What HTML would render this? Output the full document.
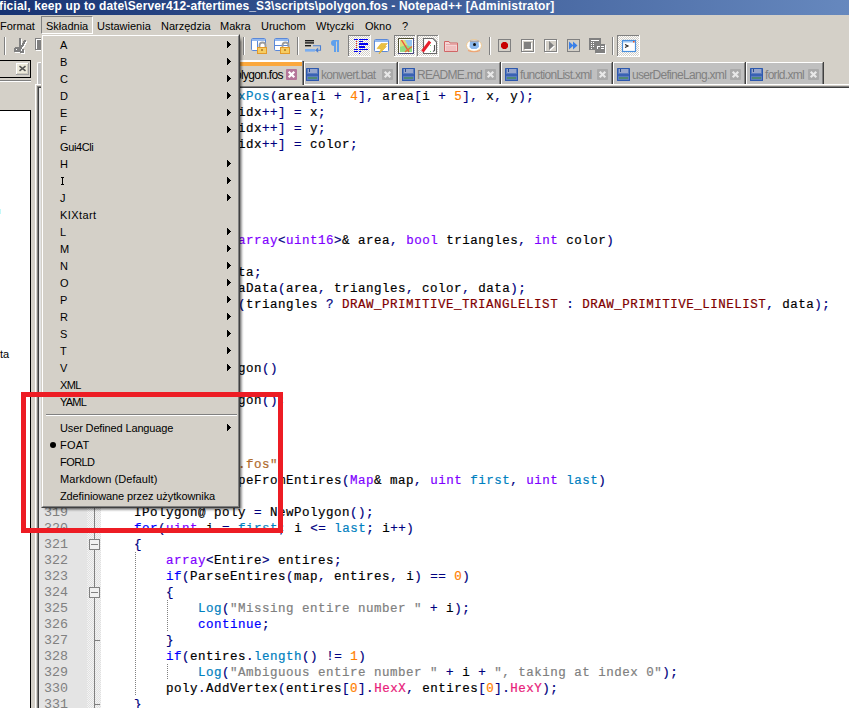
<!DOCTYPE html>
<html><head><meta charset="utf-8">
<style>
*{margin:0;padding:0;box-sizing:border-box}
html,body{width:849px;height:708px;overflow:hidden;background:#D4D0C8;position:relative;font-family:"Liberation Sans",sans-serif}
.a{position:absolute}
#title{left:0;top:0;width:849px;height:15px;background:linear-gradient(to right,#173373 0%,#6688BE 100%)}
#ttext{left:-1px;top:0px;color:#fff;font-weight:bold;font-size:12px;line-height:13px;letter-spacing:0.14px;white-space:nowrap}
.mi{position:absolute;top:19px;font-size:11px;line-height:14px;color:#000;white-space:nowrap}
/* editor */
#edframe{left:35px;top:84px;width:814px;height:624px;background:#fff;border-left:1px solid #fff;}
#lnm{left:39px;top:88px;width:48px;height:620px;background:#E4E4E4}
#fold{left:87px;top:88px;width:14px;height:620px;background-color:#F4F4F4;background-image:linear-gradient(45deg,#E0E0E0 25%,transparent 25%,transparent 75%,#E0E0E0 75%),linear-gradient(45deg,#E0E0E0 25%,transparent 25%,transparent 75%,#E0E0E0 75%);background-size:2px 2px;background-position:0 0,1px 1px}
#code{left:102px;top:89px;font-family:"Liberation Mono",monospace;font-size:12.5px;letter-spacing:0.5px;line-height:16px;white-space:pre;color:#000;font-weight:normal;-webkit-text-stroke:0.2px}
#lnums{left:38px;top:89px;width:48px;font-family:"Liberation Mono",monospace;font-size:13.333px;line-height:16px;white-space:pre;color:#808080;padding-left:6px}
.k{color:#0000FF}
.t{color:#8000FF;font-weight:normal}
.f{color:#0080C0}
.o{color:#000080}
.n{color:#FF8000;font-weight:normal}
.s{color:#808080;font-weight:normal}
.s2{color:#B06A2C;font-weight:normal}
.c{color:#800000}
.m{color:#E8207A}
/* menu */
#menu{left:41px;top:34px;width:199px;height:474px;background:#D4D0C8;border-top:1px solid #D4D0C8;border-left:1px solid #D4D0C8;border-right:1px solid #404040;border-bottom:1px solid #404040}
#menuin{left:0;top:0;right:0;bottom:0;border-top:1px solid #fff;border-left:1px solid #fff;border-right:1px solid #808080;border-bottom:1px solid #808080}
.it{position:absolute;left:18px;font-size:11px;line-height:13px;white-space:nowrap;color:#000}
.ar{position:absolute;left:185px;width:0;height:0;border-top:3.5px solid transparent;border-bottom:3.5px solid transparent;border-left:4px solid #000}
#red{left:21px;top:392px;width:262px;height:141px;border:5px solid #ED1C24}
.tt{font-size:12px;line-height:13px;color:#808080;white-space:nowrap;letter-spacing:-0.7px}
.tab{position:absolute;top:62px;height:23px;background:#C8C8C8;border-top:1px solid #fff;font-size:11px;color:#808080;white-space:nowrap}
</style></head><body>
<div id="title" class="a"></div>
<div id="ttext" class="a">ficial, keep up to date\Server412-aftertimes_S3\scripts\polygon.fos - Notepad++ [Administrator]</div>

<div class="mi" style="left:0px">Format</div>
<div class="a" style="left:41px;top:16px;width:52px;height:18px;border-top:1px solid #808080;border-left:1px solid #808080;border-bottom:1px solid #fff;border-right:1px solid #fff"></div>
<div class="mi" style="left:46px">Składnia</div>
<div class="mi" style="left:97px">Ustawienia</div>
<div class="mi" style="left:161px">Narzędzia</div>
<div class="mi" style="left:220px">Makra</div>
<div class="mi" style="left:261px">Uruchom</div>
<div class="mi" style="left:316px">Wtyczki</div>
<div class="mi" style="left:365px">Okno</div>
<div class="mi" style="left:402px">?</div>

<!-- left panel -->
<div class="a" style="left:-1px;top:60px;width:32px;height:18px;border:1px solid #000"></div>
<svg class="a" style="left:16px;top:63px" width="13" height="12" shape-rendering="crispEdges"><rect width="13" height="12" fill="#EEEBDC"/><rect width="12" height="1" fill="#fff"/><rect width="1" height="11" fill="#fff"/><rect x="0" y="11" width="13" height="1" fill="#A0A0A0"/><rect x="12" y="0" width="1" height="12" fill="#A0A0A0"/><rect x="1" y="10" width="11" height="1" fill="#D0CCC0"/><rect x="11" y="1" width="1" height="10" fill="#D0CCC0"/></svg>
<svg class="a" style="left:16px;top:63px" width="13" height="12"><path d="M3.5 3.2 L9.5 7.8 M9.5 3.2 L3.5 7.8" stroke="#555" stroke-width="1.6"/></svg>
<div class="a" style="left:0;top:80px;width:31px;height:1px;background:#808080"></div>
<div class="a" style="left:0;top:81px;width:31px;height:1px;background:#fff"></div>
<div class="a" style="left:-1px;top:110px;width:32px;height:620px;background:#fff;border:1px solid #000"></div>
<div class="a" style="left:0;top:347px;font-size:11px;line-height:14px">ta</div>
<div class="a" style="left:0;top:209px;width:1px;height:5px;background:#C4F8F8"></div>

<!-- tab bar -->
<div class="a" style="left:35px;top:84px;width:814px;height:1px;background:#fff"></div>
<div class="a" style="left:37px;top:62px;width:150px;height:22px;background:#C0C0C0;border-top:1px solid #fff;border-left:1px solid #fff;border-top-left-radius:2px"></div>
<div class="a" style="left:150px;top:60px;width:152px;height:26px;background:#D4D0C8;border-top:2px solid #fff"></div>
<div class="a" style="left:150px;top:62px;width:152px;height:4px;background:#FBA83D"></div>
<div class="a" style="left:302px;top:61px;width:1px;height:24px;background:#808080"></div>
<div class="a" style="left:303px;top:61px;width:1px;height:24px;background:#404040"></div>
<div class="a tt" style="left:229px;top:69px;color:#000">polygon.fos</div>
<svg class="a" style="left:286px;top:69px" width="11" height="11"><rect x="0" y="0" width="11" height="11" rx="1" fill="#B5769A"/><path d="M2.7 2.7 L8.3 8.3 M8.3 2.7 L2.7 8.3" stroke="#fff" stroke-width="2.2"/></svg>
<div class="a" style="left:304px;top:62px;width:92px;height:22px;background:#C0C0C0;border-top:1px solid #fff;border-left:1px solid #fff"></div>
<div class="a" style="left:396px;top:63px;width:1px;height:21px;background:#808080"></div>
<div class="a" style="left:397px;top:62px;width:1px;height:22px;background:#404040"></div>
<svg class="a" style="left:306px;top:68px" width="13" height="13"><rect x="0" y="0" width="13" height="13" rx="0.5" fill="#2C58AE"/><rect x="1" y="1" width="11" height="11" fill="#5C7CBE"/><rect x="2" y="1" width="9" height="4" fill="#97A6CC"/><rect x="3" y="1" width="1" height="3" fill="#2C4C8C"/><rect x="1" y="6" width="11" height="2" fill="#3A62B4"/><rect x="2" y="9" width="9" height="2" fill="#4F8A74"/></svg>
<div class="a tt" style="left:321px;top:69px">konwert.bat</div>
<svg class="a" style="left:382px;top:69px" width="11" height="11"><rect x="0" y="0" width="11" height="11" rx="1" fill="#AAAAAA"/><path d="M2.7 2.7 L8.3 8.3 M8.3 2.7 L2.7 8.3" stroke="#E8E8E8" stroke-width="2.2"/></svg>
<div class="a" style="left:398px;top:62px;width:101px;height:22px;background:#C0C0C0;border-top:1px solid #fff;border-left:1px solid #fff"></div>
<div class="a" style="left:499px;top:63px;width:1px;height:21px;background:#808080"></div>
<div class="a" style="left:500px;top:62px;width:1px;height:22px;background:#404040"></div>
<svg class="a" style="left:402px;top:68px" width="13" height="13"><rect x="0" y="0" width="13" height="13" rx="0.5" fill="#2C58AE"/><rect x="1" y="1" width="11" height="11" fill="#5C7CBE"/><rect x="2" y="1" width="9" height="4" fill="#97A6CC"/><rect x="3" y="1" width="1" height="3" fill="#2C4C8C"/><rect x="1" y="6" width="11" height="2" fill="#3A62B4"/><rect x="2" y="9" width="9" height="2" fill="#4F8A74"/></svg>
<div class="a tt" style="left:417px;top:69px">README.md</div>
<svg class="a" style="left:485px;top:69px" width="11" height="11"><rect x="0" y="0" width="11" height="11" rx="1" fill="#AAAAAA"/><path d="M2.7 2.7 L8.3 8.3 M8.3 2.7 L2.7 8.3" stroke="#E8E8E8" stroke-width="2.2"/></svg>
<div class="a" style="left:501px;top:62px;width:110px;height:22px;background:#C0C0C0;border-top:1px solid #fff;border-left:1px solid #fff"></div>
<div class="a" style="left:611px;top:63px;width:1px;height:21px;background:#808080"></div>
<div class="a" style="left:612px;top:62px;width:1px;height:22px;background:#404040"></div>
<svg class="a" style="left:505px;top:68px" width="13" height="13"><rect x="0" y="0" width="13" height="13" rx="0.5" fill="#2C58AE"/><rect x="1" y="1" width="11" height="11" fill="#5C7CBE"/><rect x="2" y="1" width="9" height="4" fill="#97A6CC"/><rect x="3" y="1" width="1" height="3" fill="#2C4C8C"/><rect x="1" y="6" width="11" height="2" fill="#3A62B4"/><rect x="2" y="9" width="9" height="2" fill="#4F8A74"/></svg>
<div class="a tt" style="left:520px;top:69px">functionList.xml</div>
<svg class="a" style="left:597px;top:69px" width="11" height="11"><rect x="0" y="0" width="11" height="11" rx="1" fill="#AAAAAA"/><path d="M2.7 2.7 L8.3 8.3 M8.3 2.7 L2.7 8.3" stroke="#E8E8E8" stroke-width="2.2"/></svg>
<div class="a" style="left:613px;top:62px;width:131px;height:22px;background:#C0C0C0;border-top:1px solid #fff;border-left:1px solid #fff"></div>
<div class="a" style="left:744px;top:63px;width:1px;height:21px;background:#808080"></div>
<div class="a" style="left:745px;top:62px;width:1px;height:22px;background:#404040"></div>
<svg class="a" style="left:617px;top:68px" width="13" height="13"><rect x="0" y="0" width="13" height="13" rx="0.5" fill="#2C58AE"/><rect x="1" y="1" width="11" height="11" fill="#5C7CBE"/><rect x="2" y="1" width="9" height="4" fill="#97A6CC"/><rect x="3" y="1" width="1" height="3" fill="#2C4C8C"/><rect x="1" y="6" width="11" height="2" fill="#3A62B4"/><rect x="2" y="9" width="9" height="2" fill="#4F8A74"/></svg>
<div class="a tt" style="left:632px;top:69px">userDefineLang.xml</div>
<svg class="a" style="left:730px;top:69px" width="11" height="11"><rect x="0" y="0" width="11" height="11" rx="1" fill="#AAAAAA"/><path d="M2.7 2.7 L8.3 8.3 M8.3 2.7 L2.7 8.3" stroke="#E8E8E8" stroke-width="2.2"/></svg>
<div class="a" style="left:746px;top:62px;width:76px;height:22px;background:#C0C0C0;border-top:1px solid #fff;border-left:1px solid #fff"></div>
<div class="a" style="left:822px;top:63px;width:1px;height:21px;background:#808080"></div>
<div class="a" style="left:823px;top:62px;width:1px;height:22px;background:#404040"></div>
<svg class="a" style="left:750px;top:68px" width="13" height="13"><rect x="0" y="0" width="13" height="13" rx="0.5" fill="#2C58AE"/><rect x="1" y="1" width="11" height="11" fill="#5C7CBE"/><rect x="2" y="1" width="9" height="4" fill="#97A6CC"/><rect x="3" y="1" width="1" height="3" fill="#2C4C8C"/><rect x="1" y="6" width="11" height="2" fill="#3A62B4"/><rect x="2" y="9" width="9" height="2" fill="#4F8A74"/></svg>
<div class="a tt" style="left:765px;top:69px">forld.xml</div>
<svg class="a" style="left:808px;top:69px" width="11" height="11"><rect x="0" y="0" width="11" height="11" rx="1" fill="#AAAAAA"/><path d="M2.7 2.7 L8.3 8.3 M8.3 2.7 L2.7 8.3" stroke="#E8E8E8" stroke-width="2.2"/></svg>
<svg class="a" style="left:0;top:0" width="849" height="60"><defs><pattern id="chk" x="0" y="0" width="2" height="2" patternUnits="userSpaceOnUse"><rect x="0" y="0" width="2" height="2" fill="#fff" shape-rendering="crispEdges"/><rect x="0" y="0" width="1" height="1" fill="#D4D0C8" shape-rendering="crispEdges"/><rect x="1" y="1" width="1" height="1" fill="#D4D0C8" shape-rendering="crispEdges"/></pattern></defs><g shape-rendering="crispEdges"><rect x="4" y="37" width="1" height="18" fill="#808080"/><rect x="5" y="37" width="1" height="18" fill="#fff"/><g fill="#fff"><rect x="20" y="39" width="1" height="1"/><rect x="21" y="39" width="1" height="1"/><rect x="20" y="40" width="1" height="1"/><rect x="21" y="40" width="1" height="1"/><rect x="20" y="41" width="1" height="1"/><rect x="21" y="41" width="1" height="1"/><rect x="25" y="41" width="1" height="1"/><rect x="26" y="41" width="1" height="1"/><rect x="20" y="42" width="1" height="1"/><rect x="21" y="42" width="1" height="1"/><rect x="24" y="42" width="1" height="1"/><rect x="25" y="42" width="1" height="1"/><rect x="26" y="42" width="1" height="1"/><rect x="20" y="43" width="1" height="1"/><rect x="21" y="43" width="1" height="1"/><rect x="24" y="43" width="1" height="1"/><rect x="25" y="43" width="1" height="1"/><rect x="20" y="44" width="1" height="1"/><rect x="21" y="44" width="1" height="1"/><rect x="23" y="44" width="1" height="1"/><rect x="24" y="44" width="1" height="1"/><rect x="25" y="44" width="1" height="1"/><rect x="20" y="45" width="1" height="1"/><rect x="21" y="45" width="1" height="1"/><rect x="23" y="45" width="1" height="1"/><rect x="24" y="45" width="1" height="1"/><rect x="20" y="46" width="1" height="1"/><rect x="21" y="46" width="1" height="1"/><rect x="22" y="46" width="1" height="1"/><rect x="23" y="46" width="1" height="1"/><rect x="24" y="46" width="1" height="1"/><rect x="20" y="47" width="1" height="1"/><rect x="21" y="47" width="1" height="1"/><rect x="22" y="47" width="1" height="1"/><rect x="23" y="47" width="1" height="1"/><rect x="16" y="48" width="1" height="1"/><rect x="17" y="48" width="1" height="1"/><rect x="18" y="48" width="1" height="1"/><rect x="19" y="48" width="1" height="1"/><rect x="20" y="48" width="1" height="1"/><rect x="21" y="48" width="1" height="1"/><rect x="22" y="48" width="1" height="1"/><rect x="15" y="49" width="1" height="1"/><rect x="16" y="49" width="1" height="1"/><rect x="17" y="49" width="1" height="1"/><rect x="18" y="49" width="1" height="1"/><rect x="19" y="49" width="1" height="1"/><rect x="20" y="49" width="1" height="1"/><rect x="21" y="49" width="1" height="1"/><rect x="22" y="49" width="1" height="1"/><rect x="15" y="50" width="1" height="1"/><rect x="16" y="50" width="1" height="1"/><rect x="18" y="50" width="1" height="1"/><rect x="19" y="50" width="1" height="1"/><rect x="20" y="50" width="1" height="1"/><rect x="21" y="50" width="1" height="1"/><rect x="23" y="50" width="1" height="1"/><rect x="24" y="50" width="1" height="1"/><rect x="15" y="51" width="1" height="1"/><rect x="16" y="51" width="1" height="1"/><rect x="17" y="51" width="1" height="1"/><rect x="18" y="51" width="1" height="1"/><rect x="19" y="51" width="1" height="1"/><rect x="20" y="51" width="1" height="1"/><rect x="21" y="51" width="1" height="1"/><rect x="23" y="51" width="1" height="1"/><rect x="24" y="51" width="1" height="1"/><rect x="15" y="52" width="1" height="1"/><rect x="16" y="52" width="1" height="1"/><rect x="17" y="52" width="1" height="1"/><rect x="18" y="52" width="1" height="1"/><rect x="19" y="52" width="1" height="1"/><rect x="20" y="52" width="1" height="1"/><rect x="21" y="52" width="1" height="1"/><rect x="22" y="52" width="1" height="1"/><rect x="23" y="52" width="1" height="1"/><rect x="24" y="52" width="1" height="1"/><rect x="21" y="53" width="1" height="1"/><rect x="22" y="53" width="1" height="1"/><rect x="23" y="53" width="1" height="1"/><rect x="24" y="53" width="1" height="1"/></g><g fill="#808080"><rect x="19" y="38" width="1" height="1"/><rect x="20" y="38" width="1" height="1"/><rect x="19" y="39" width="1" height="1"/><rect x="20" y="39" width="1" height="1"/><rect x="19" y="40" width="1" height="1"/><rect x="20" y="40" width="1" height="1"/><rect x="24" y="40" width="1" height="1"/><rect x="25" y="40" width="1" height="1"/><rect x="19" y="41" width="1" height="1"/><rect x="20" y="41" width="1" height="1"/><rect x="23" y="41" width="1" height="1"/><rect x="24" y="41" width="1" height="1"/><rect x="25" y="41" width="1" height="1"/><rect x="19" y="42" width="1" height="1"/><rect x="20" y="42" width="1" height="1"/><rect x="23" y="42" width="1" height="1"/><rect x="24" y="42" width="1" height="1"/><rect x="19" y="43" width="1" height="1"/><rect x="20" y="43" width="1" height="1"/><rect x="22" y="43" width="1" height="1"/><rect x="23" y="43" width="1" height="1"/><rect x="24" y="43" width="1" height="1"/><rect x="19" y="44" width="1" height="1"/><rect x="20" y="44" width="1" height="1"/><rect x="22" y="44" width="1" height="1"/><rect x="23" y="44" width="1" height="1"/><rect x="19" y="45" width="1" height="1"/><rect x="20" y="45" width="1" height="1"/><rect x="21" y="45" width="1" height="1"/><rect x="22" y="45" width="1" height="1"/><rect x="23" y="45" width="1" height="1"/><rect x="19" y="46" width="1" height="1"/><rect x="20" y="46" width="1" height="1"/><rect x="21" y="46" width="1" height="1"/><rect x="22" y="46" width="1" height="1"/><rect x="15" y="47" width="1" height="1"/><rect x="16" y="47" width="1" height="1"/><rect x="17" y="47" width="1" height="1"/><rect x="18" y="47" width="1" height="1"/><rect x="19" y="47" width="1" height="1"/><rect x="20" y="47" width="1" height="1"/><rect x="21" y="47" width="1" height="1"/><rect x="14" y="48" width="1" height="1"/><rect x="15" y="48" width="1" height="1"/><rect x="16" y="48" width="1" height="1"/><rect x="17" y="48" width="1" height="1"/><rect x="18" y="48" width="1" height="1"/><rect x="19" y="48" width="1" height="1"/><rect x="20" y="48" width="1" height="1"/><rect x="21" y="48" width="1" height="1"/><rect x="14" y="49" width="1" height="1"/><rect x="15" y="49" width="1" height="1"/><rect x="17" y="49" width="1" height="1"/><rect x="18" y="49" width="1" height="1"/><rect x="19" y="49" width="1" height="1"/><rect x="20" y="49" width="1" height="1"/><rect x="22" y="49" width="1" height="1"/><rect x="23" y="49" width="1" height="1"/><rect x="14" y="50" width="1" height="1"/><rect x="15" y="50" width="1" height="1"/><rect x="16" y="50" width="1" height="1"/><rect x="17" y="50" width="1" height="1"/><rect x="18" y="50" width="1" height="1"/><rect x="19" y="50" width="1" height="1"/><rect x="20" y="50" width="1" height="1"/><rect x="22" y="50" width="1" height="1"/><rect x="23" y="50" width="1" height="1"/><rect x="14" y="51" width="1" height="1"/><rect x="15" y="51" width="1" height="1"/><rect x="16" y="51" width="1" height="1"/><rect x="17" y="51" width="1" height="1"/><rect x="18" y="51" width="1" height="1"/><rect x="19" y="51" width="1" height="1"/><rect x="20" y="51" width="1" height="1"/><rect x="21" y="51" width="1" height="1"/><rect x="22" y="51" width="1" height="1"/><rect x="23" y="51" width="1" height="1"/><rect x="20" y="52" width="1" height="1"/><rect x="21" y="52" width="1" height="1"/><rect x="22" y="52" width="1" height="1"/><rect x="23" y="52" width="1" height="1"/></g><rect x="36" y="39" width="6" height="12" fill="#fff"/><rect x="35" y="38" width="7" height="12" fill="#808080"/><rect x="36" y="39" width="6" height="10" fill="#fff"/><rect x="37" y="40" width="5" height="9" fill="#808080"/><rect x="243" y="37" width="1" height="18" fill="#808080"/><rect x="244" y="37" width="1" height="18" fill="#fff"/><rect x="297" y="37" width="1" height="18" fill="#808080"/><rect x="298" y="37" width="1" height="18" fill="#fff"/><rect x="349" y="36" width="21" height="20" fill="url(#chk)"/><rect x="348" y="35" width="23" height="1" fill="#808080"/><rect x="348" y="35" width="1" height="22" fill="#808080"/><rect x="348" y="56" width="23" height="1" fill="#fff"/><rect x="370" y="35" width="1" height="22" fill="#fff"/><g fill="#0000F0"><rect x="354" y="39" width="4" height="1"/><rect x="359" y="39" width="9" height="1"/><rect x="359" y="41" width="4" height="1"/><rect x="359" y="43" width="9" height="2"/><rect x="359" y="46" width="6" height="2"/><rect x="354" y="49" width="4" height="1"/><rect x="359" y="49" width="9" height="1"/><rect x="354" y="51" width="4" height="1"/><rect x="359" y="51" width="2" height="1"/><rect x="359" y="53" width="1" height="1"/></g><g fill="#F02020"><rect x="356" y="41" width="1" height="1"/><rect x="356" y="43" width="1" height="1"/><rect x="356" y="45" width="1" height="1"/><rect x="356" y="47" width="1" height="1"/></g><rect x="395" y="36" width="20" height="20" fill="url(#chk)"/><rect x="394" y="35" width="22" height="1" fill="#808080"/><rect x="394" y="35" width="1" height="22" fill="#808080"/><rect x="394" y="56" width="22" height="1" fill="#fff"/><rect x="415" y="35" width="1" height="22" fill="#fff"/><rect x="418" y="36" width="20" height="20" fill="url(#chk)"/><rect x="417" y="35" width="22" height="1" fill="#808080"/><rect x="417" y="35" width="1" height="22" fill="#808080"/><rect x="417" y="56" width="22" height="1" fill="#fff"/><rect x="438" y="35" width="1" height="22" fill="#fff"/><rect x="489" y="37" width="1" height="18" fill="#808080"/><rect x="490" y="37" width="1" height="18" fill="#fff"/><rect x="612" y="37" width="1" height="18" fill="#808080"/><rect x="613" y="37" width="1" height="18" fill="#fff"/><rect x="618" y="36" width="21" height="20" fill="url(#chk)"/><rect x="617" y="35" width="23" height="1" fill="#808080"/><rect x="617" y="35" width="1" height="22" fill="#808080"/><rect x="617" y="56" width="23" height="1" fill="#fff"/><rect x="639" y="35" width="1" height="22" fill="#fff"/></g><rect x="251.5" y="38.5" width="14" height="12" rx="1.2" fill="#fff" stroke="#5A88D8"/><rect x="252" y="39" width="13" height="2" fill="#93B8EE"/><rect x="257" y="41" width="1" height="9" fill="#5A88D8"/><path d="M259.5 48 V45.5 A2.8 2.8 0 0 1 265.5 45.5 V48" fill="none" stroke="#9C9C9C" stroke-width="1.8"/><rect x="257.5" y="47.5" width="9" height="6" fill="#F6CD62" stroke="#E39A2A"/><rect x="261" y="49" width="2" height="2" fill="#C08A30"/><rect x="274.5" y="38.5" width="14" height="12" rx="1.2" fill="#fff" stroke="#5A88D8"/><rect x="275" y="39" width="13" height="2" fill="#93B8EE"/><rect x="275" y="45" width="13" height="1" fill="#5A88D8"/><path d="M282.5 48 V45.5 A2.8 2.8 0 0 1 288.5 45.5 V48" fill="none" stroke="#9C9C9C" stroke-width="1.8"/><rect x="280.5" y="47.5" width="9" height="6" fill="#F6CD62" stroke="#E39A2A"/><rect x="284" y="49" width="2" height="2" fill="#C08A30"/><rect x="305" y="40" width="9" height="1.4" fill="#1a1a1a"/><rect x="305" y="42.2" width="9" height="1.4" fill="#1a1a1a"/><rect x="305" y="45" width="6" height="1.4" fill="#1a1a1a"/><path d="M313 45.8 H320.5 V50.2 H317" fill="none" stroke="#4A7FD2" stroke-width="1.1"/><path d="M315 50.2 L318.2 47.6 L318.2 52.8 Z" fill="#4A7FD2"/><rect x="305" y="49" width="10" height="2.6" fill="#79ADF0"/><path d="M334 40 H339 V52 H337 V41.5 H336 V52 H334 V46 A3 3 0 0 1 334 40 Z" fill="#5FA0EC"/><rect x="374.5" y="39.5" width="14" height="12" rx="1" fill="#fff" stroke="#5A88D8"/><rect x="375" y="40" width="13" height="2" fill="#93B8EE"/><path d="M377 48.5 L381 43.5 H387.5 L384.5 46.5 H386.5 L379 54 L381 49 Z" fill="#EBC040" stroke="#D8A820" stroke-width="0.5"/><rect x="398.5" y="38.5" width="15" height="15" fill="#fff" stroke="#4A4A80"/><path d="M398.5 53 V38.5 H413" fill="none" stroke="#505030"/><rect x="400" y="40" width="12" height="12" fill="#DCE07A"/><path d="M405 40 H412 V47 L408 46 Z" fill="#94C4F0"/><path d="M400 47 L406 45 L412 47 V52 H400 Z" fill="#92DC84"/><path d="M401.5 40 L409 52" stroke="#F0503A" stroke-width="1.4" fill="none"/><path d="M412 46.5 L405 52" stroke="#F07030" stroke-width="1.4" fill="none"/><path d="M423.5 38.5 H433 L436.5 42 V53.5 H423.5 Z" fill="#fff" stroke="#6A6A6A" stroke-width="1.1"/><path d="M422.5 51.5 L430 41.5" stroke="#E81E2A" stroke-width="3"/><rect x="430" y="45" width="1" height="1" fill="#7c7"/><rect x="430" y="51" width="1" height="1" fill="#7c7"/><path d="M434.5 45 V50.5 L433 51.5" stroke="#555" fill="none" stroke-width="1.1"/><path d="M444.5 41.5 H449 L450 43 H457.5 V51.5 H444.5 Z" fill="#F4D4D4" stroke="#D06666"/><rect x="446" y="44" width="11" height="1" fill="#E8A8A8"/><rect x="446" y="46" width="10" height="5" fill="#F0C0C0"/><ellipse cx="474" cy="45.5" rx="7.5" ry="5.8" fill="#fff" stroke="#EFC890" stroke-width="1"/><path d="M470 41.5 H478.5 L479 47 L476.5 49 H471.5 L469.5 47 Z" fill="#8CB8EC"/><rect x="470" y="40.5" width="9" height="1.6" fill="#A8A8B0"/><circle cx="474.5" cy="44.6" r="1.5" fill="#111"/><path d="M468 50.5 Q474 53 480 50.5" stroke="#F0A070" stroke-width="1.2" fill="none"/><rect x="498.5" y="39.5" width="12" height="12" fill="none" stroke="#808080"/><path d="M503 42 H506 L508 44 V47 L506 49 H503 L501 47 V44 Z" fill="#C80000"/><rect x="522.5" y="40.5" width="12" height="12" fill="none" stroke="#fff"/><rect x="521.5" y="39.5" width="12" height="12" fill="none" stroke="#808080"/><rect x="525" y="43" width="7" height="7" fill="#fff"/><rect x="524" y="42" width="7" height="7" fill="#808080"/><rect x="545.5" y="40.5" width="12" height="12" fill="none" stroke="#fff"/><rect x="544.5" y="39.5" width="12" height="12" fill="none" stroke="#808080"/><path d="M550 42 L555 46.5 L550 51 Z" fill="#fff"/><path d="M549 41 L554 45.5 L549 50 Z" fill="#808080"/><rect x="567.5" y="39.5" width="12" height="12" fill="none" stroke="#808080"/><path d="M569 41.5 L573.5 45.5 L569 49.5 Z M573 41.5 L577.5 45.5 L573 49.5 Z" fill="#3A80E8"/><g shape-rendering="crispEdges"><rect x="589" y="38" width="12" height="12" fill="#808080"/><rect x="596" y="45" width="10" height="9" fill="#fff"/><rect x="595" y="44" width="10" height="9" fill="#808080"/><g fill="#fff"><rect x="591" y="40" width="8" height="1"/><rect x="591" y="42" width="1" height="1"/><rect x="591" y="44" width="1" height="1"/><rect x="591" y="46" width="1" height="1"/><rect x="591" y="48" width="1" height="1"/><rect x="593" y="42" width="1" height="1"/><rect x="593" y="44" width="1" height="1"/><rect x="593" y="46" width="1" height="1"/><rect x="597" y="46" width="1" height="3"/><rect x="597" y="46" width="3" height="1"/><rect x="601" y="46" width="3" height="1"/><rect x="601" y="48" width="3" height="1"/></g></g><rect x="622.5" y="40.5" width="13" height="11" fill="#fff" stroke="#4A90DC" stroke-width="1.2"/><rect x="623" y="41" width="12" height="1.5" fill="#9CC4F0"/><rect x="633" y="41" width="1.5" height="1.5" fill="#F05020"/><path d="M625 44.5 L628 46 L625 47.5" fill="none" stroke="#222" stroke-width="1.1"/></svg>
<!-- editor -->
<div class="a" style="left:35px;top:84px;width:115px;height:1px;background:#fff"></div>
<div class="a" style="left:304px;top:84px;width:545px;height:1px;background:#fff"></div>
<div class="a" style="left:35px;top:84px;width:1px;height:624px;background:#fff"></div>
<div class="a" style="left:36px;top:85px;width:813px;height:623px;background:#D4D0C8"></div>
<div class="a" style="left:37px;top:86px;width:812px;height:622px;background:#808080"></div>
<div class="a" style="left:38px;top:87px;width:811px;height:621px;background:#404040"></div>
<div class="a" style="left:39px;top:88px;width:810px;height:620px;background:#fff"></div>
<div id="lnm" class="a"></div>
<div id="fold" class="a"></div>
<div class="a" style="left:94px;top:504px;width:1px;height:204px;background:#808080"></div>
<div class="a" style="left:89px;top:539px;width:11px;height:11px;border:1px solid #808080;background:#F0F0F0"></div><div class="a" style="left:91px;top:544px;width:7px;height:1px;background:#808080"></div>
<div class="a" style="left:89px;top:587px;width:11px;height:11px;border:1px solid #808080;background:#F0F0F0"></div><div class="a" style="left:91px;top:592px;width:7px;height:1px;background:#808080"></div>
<div class="a" style="left:94px;top:632px;width:6px;height:1px;background:#808080;top:640px"></div>
<div class="a" style="left:94px;top:704px;width:6px;height:1px;background:#808080"></div>
<div class="a" style="left:135px;top:552px;width:1px;height:144px;background:repeating-linear-gradient(to bottom,#808080 0,#808080 1px,transparent 1px,transparent 2px)"></div>
<div class="a" style="left:167px;top:600px;width:1px;height:32px;background:repeating-linear-gradient(to bottom,#808080 0,#808080 1px,transparent 1px,transparent 2px)"></div>
<div class="a" style="left:167px;top:664px;width:1px;height:16px;background:repeating-linear-gradient(to bottom,#808080 0,#808080 1px,transparent 1px,transparent 2px)"></div>
<div id="lnums" class="a">293
294
295
296
297
298
299
300
301
302
303
304
305
306
307
308
309
310
311
312
313
314
315
316
317
318
319
320
321
322
323
324
325
326
327
328
329
330
331</div>
<div id="code" class="a">                 <span class="f">xPos</span><span class="o">(</span>area<span class="o">[</span>i <span class="o">+</span> <span class="n">4</span><span class="o">],</span> area<span class="o">[</span>i <span class="o">+</span> <span class="n">5</span><span class="o">],</span> x<span class="o">,</span> y<span class="o">);</span>
                 idx<span class="o">++]</span> <span class="o">=</span> x<span class="o">;</span>
                 idx<span class="o">++]</span> <span class="o">=</span> y<span class="o">;</span>
                 idx<span class="o">++]</span> <span class="o">=</span> color<span class="o">;</span>





                 <span class="t">array</span><span class="o">&lt;</span><span class="t">uint16</span><span class="o">&gt;</span>&amp; area<span class="o">,</span> <span class="t">bool</span> triangles<span class="o">,</span> <span class="t">int</span> color<span class="o">)</span>

                 ta<span class="o">;</span>
                 aData<span class="o">(</span>area<span class="o">,</span> triangles<span class="o">,</span> color<span class="o">,</span> data<span class="o">);</span>
                 <span class="o">(</span>triangles <span class="o">?</span> <span class="c">DRAW_PRIMITIVE_TRIANGLELIST</span> <span class="o">:</span> <span class="c">DRAW_PRIMITIVE_LINELIST</span><span class="o">,</span> data<span class="o">);</span>



                 gon<span class="o">()</span>

                 gon<span class="o">();</span>



                 <span class="s2">.fos"</span>
                 peFromEntires<span class="o">(</span><span class="t">Map</span>&amp; map<span class="o">,</span> <span class="t">uint</span> <span class="f">first</span><span class="o">,</span> <span class="t">uint</span> <span class="f">last</span><span class="o">)</span>

    IPolygon@ poly <span class="o">=</span> NewPolygon<span class="o">();</span>
    <span class="k">for</span><span class="o">(</span><span class="t">uint</span> i <span class="o">=</span> <span class="f">first</span><span class="o">;</span> i <span class="o">&lt;=</span> <span class="f">last</span><span class="o">;</span> i<span class="o">++)</span>
    <span class="o">{</span>
        <span class="t">array</span><span class="o">&lt;</span>Entire<span class="o">&gt;</span> entires<span class="o">;</span>
        <span class="k">if</span><span class="o">(</span>ParseEntires<span class="o">(</span>map<span class="o">,</span> entires<span class="o">,</span> i<span class="o">)</span> <span class="o">==</span> <span class="n">0</span><span class="o">)</span>
        <span class="o">{</span>
            <span class="f">Log</span><span class="o">(</span><span class="s">"Missing entire number "</span> <span class="o">+</span> i<span class="o">);</span>
            <span class="k">continue</span><span class="o">;</span>
        <span class="o">}</span>
        <span class="k">if</span><span class="o">(</span>entires<span class="o">.</span><span class="f">length</span><span class="o">()</span> <span class="o">!=</span> <span class="n">1</span><span class="o">)</span>
            <span class="f">Log</span><span class="o">(</span><span class="s">"Ambiguous entire number "</span> <span class="o">+</span> i <span class="o">+</span> <span class="s">", taking at index 0"</span><span class="o">);</span>
        poly<span class="o">.</span>AddVertex<span class="o">(</span>entires<span class="o">[</span><span class="n">0</span><span class="o">].</span><span class="m">HexX</span><span class="o">,</span> entires<span class="o">[</span><span class="n">0</span><span class="o">].</span><span class="m">HexY</span><span class="o">);</span>
    <span class="o">}</span></div>

<!-- menu popup -->
<div class="a" style="left:240px;top:36px;width:4px;height:472px;-webkit-mask-image:linear-gradient(to bottom,transparent 0,#000 6px);background:linear-gradient(to right,rgba(0,0,0,0.46) 0,rgba(0,0,0,0.46) 1px,rgba(0,0,0,0.28) 1px,rgba(0,0,0,0.28) 2px,rgba(0,0,0,0.12) 2px,rgba(0,0,0,0.12) 3px,rgba(0,0,0,0.03) 3px)"></div>
<div class="a" style="left:43px;top:508px;width:197px;height:4px;-webkit-mask-image:linear-gradient(to right,transparent 0,#000 6px);background:linear-gradient(to bottom,rgba(0,0,0,0.46) 0,rgba(0,0,0,0.46) 1px,rgba(0,0,0,0.28) 1px,rgba(0,0,0,0.28) 2px,rgba(0,0,0,0.12) 2px,rgba(0,0,0,0.12) 3px,rgba(0,0,0,0.03) 3px)"></div>
<div class="a" style="left:240px;top:508px;width:4px;height:4px;background:radial-gradient(circle at 0 0,rgba(0,0,0,0.4) 0,rgba(0,0,0,0.15) 2px,rgba(0,0,0,0) 4px)"></div>

<div id="menu" class="a"><div id="menuin" class="a"></div>
<div class="it" style="top:4px">A</div>
<svg class="a" style="left:185px;top:6px" width="4" height="7"><path d="M0 0 H1 V7 H0 Z M1 1 H2 V6 H1 Z M2 2 H3 V5 H2 Z M3 3 H4 V4 H3 Z" fill="#000"/></svg>
<div class="it" style="top:21px">B</div>
<svg class="a" style="left:185px;top:23px" width="4" height="7"><path d="M0 0 H1 V7 H0 Z M1 1 H2 V6 H1 Z M2 2 H3 V5 H2 Z M3 3 H4 V4 H3 Z" fill="#000"/></svg>
<div class="it" style="top:38px">C</div>
<svg class="a" style="left:185px;top:40px" width="4" height="7"><path d="M0 0 H1 V7 H0 Z M1 1 H2 V6 H1 Z M2 2 H3 V5 H2 Z M3 3 H4 V4 H3 Z" fill="#000"/></svg>
<div class="it" style="top:55px">D</div>
<svg class="a" style="left:185px;top:57px" width="4" height="7"><path d="M0 0 H1 V7 H0 Z M1 1 H2 V6 H1 Z M2 2 H3 V5 H2 Z M3 3 H4 V4 H3 Z" fill="#000"/></svg>
<div class="it" style="top:72px">E</div>
<svg class="a" style="left:185px;top:74px" width="4" height="7"><path d="M0 0 H1 V7 H0 Z M1 1 H2 V6 H1 Z M2 2 H3 V5 H2 Z M3 3 H4 V4 H3 Z" fill="#000"/></svg>
<div class="it" style="top:89px">F</div>
<svg class="a" style="left:185px;top:91px" width="4" height="7"><path d="M0 0 H1 V7 H0 Z M1 1 H2 V6 H1 Z M2 2 H3 V5 H2 Z M3 3 H4 V4 H3 Z" fill="#000"/></svg>
<div class="it" style="top:106px;letter-spacing:-0.38px">Gui4Cli</div>
<div class="it" style="top:123px">H</div>
<svg class="a" style="left:185px;top:125px" width="4" height="7"><path d="M0 0 H1 V7 H0 Z M1 1 H2 V6 H1 Z M2 2 H3 V5 H2 Z M3 3 H4 V4 H3 Z" fill="#000"/></svg>
<svg class="a" style="left:19px;top:142px" width="3" height="8" shape-rendering="crispEdges"><rect x="0" y="0" width="3" height="1" fill="#000"/><rect x="1" y="0" width="1" height="8" fill="#000"/><rect x="0" y="7" width="3" height="1" fill="#000"/></svg>
<svg class="a" style="left:185px;top:142px" width="4" height="7"><path d="M0 0 H1 V7 H0 Z M1 1 H2 V6 H1 Z M2 2 H3 V5 H2 Z M3 3 H4 V4 H3 Z" fill="#000"/></svg>
<div class="it" style="top:157px">J</div>
<svg class="a" style="left:185px;top:159px" width="4" height="7"><path d="M0 0 H1 V7 H0 Z M1 1 H2 V6 H1 Z M2 2 H3 V5 H2 Z M3 3 H4 V4 H3 Z" fill="#000"/></svg>
<div class="it" style="top:174px;letter-spacing:0.4px">KIXtart</div>
<div class="it" style="top:191px">L</div>
<svg class="a" style="left:185px;top:193px" width="4" height="7"><path d="M0 0 H1 V7 H0 Z M1 1 H2 V6 H1 Z M2 2 H3 V5 H2 Z M3 3 H4 V4 H3 Z" fill="#000"/></svg>
<div class="it" style="top:208px">M</div>
<svg class="a" style="left:185px;top:210px" width="4" height="7"><path d="M0 0 H1 V7 H0 Z M1 1 H2 V6 H1 Z M2 2 H3 V5 H2 Z M3 3 H4 V4 H3 Z" fill="#000"/></svg>
<div class="it" style="top:225px">N</div>
<svg class="a" style="left:185px;top:227px" width="4" height="7"><path d="M0 0 H1 V7 H0 Z M1 1 H2 V6 H1 Z M2 2 H3 V5 H2 Z M3 3 H4 V4 H3 Z" fill="#000"/></svg>
<div class="it" style="top:242px">O</div>
<svg class="a" style="left:185px;top:244px" width="4" height="7"><path d="M0 0 H1 V7 H0 Z M1 1 H2 V6 H1 Z M2 2 H3 V5 H2 Z M3 3 H4 V4 H3 Z" fill="#000"/></svg>
<div class="it" style="top:259px">P</div>
<svg class="a" style="left:185px;top:261px" width="4" height="7"><path d="M0 0 H1 V7 H0 Z M1 1 H2 V6 H1 Z M2 2 H3 V5 H2 Z M3 3 H4 V4 H3 Z" fill="#000"/></svg>
<div class="it" style="top:276px">R</div>
<svg class="a" style="left:185px;top:278px" width="4" height="7"><path d="M0 0 H1 V7 H0 Z M1 1 H2 V6 H1 Z M2 2 H3 V5 H2 Z M3 3 H4 V4 H3 Z" fill="#000"/></svg>
<div class="it" style="top:293px">S</div>
<svg class="a" style="left:185px;top:295px" width="4" height="7"><path d="M0 0 H1 V7 H0 Z M1 1 H2 V6 H1 Z M2 2 H3 V5 H2 Z M3 3 H4 V4 H3 Z" fill="#000"/></svg>
<div class="it" style="top:310px">T</div>
<svg class="a" style="left:185px;top:312px" width="4" height="7"><path d="M0 0 H1 V7 H0 Z M1 1 H2 V6 H1 Z M2 2 H3 V5 H2 Z M3 3 H4 V4 H3 Z" fill="#000"/></svg>
<div class="it" style="top:327px">V</div>
<svg class="a" style="left:185px;top:329px" width="4" height="7"><path d="M0 0 H1 V7 H0 Z M1 1 H2 V6 H1 Z M2 2 H3 V5 H2 Z M3 3 H4 V4 H3 Z" fill="#000"/></svg>
<div class="it" style="top:344px;letter-spacing:-0.65px">XML</div>
<div class="it" style="top:361px;letter-spacing:-0.77px">YAML</div>
<div class="a" style="left:4px;top:379px;width:191px;height:1px;background:#808080"></div>
<div class="a" style="left:4px;top:380px;width:191px;height:1px;background:#fff"></div>
<div class="it" style="top:387px;letter-spacing:-0.14px">User Defined Language</div>
<div class="it" style="top:404px;letter-spacing:0.2px">FOAT</div>
<div class="it" style="top:421px;letter-spacing:-0.57px">FORLD</div>
<div class="it" style="top:438px;letter-spacing:0.08px">Markdown (Default)</div>
<div class="it" style="top:455px;letter-spacing:-0.11px">Zdefiniowane przez użytkownika</div>
<svg class="a" style="left:185px;top:389px" width="4" height="7"><path d="M0 0 H1 V7 H0 Z M1 1 H2 V6 H1 Z M2 2 H3 V5 H2 Z M3 3 H4 V4 H3 Z" fill="#000"/></svg>
<div class="a" style="left:8px;top:407px;width:6px;height:6px;border-radius:50%;background:#000"></div>
</div>
<div id="red" class="a"></div>
</body></html>
